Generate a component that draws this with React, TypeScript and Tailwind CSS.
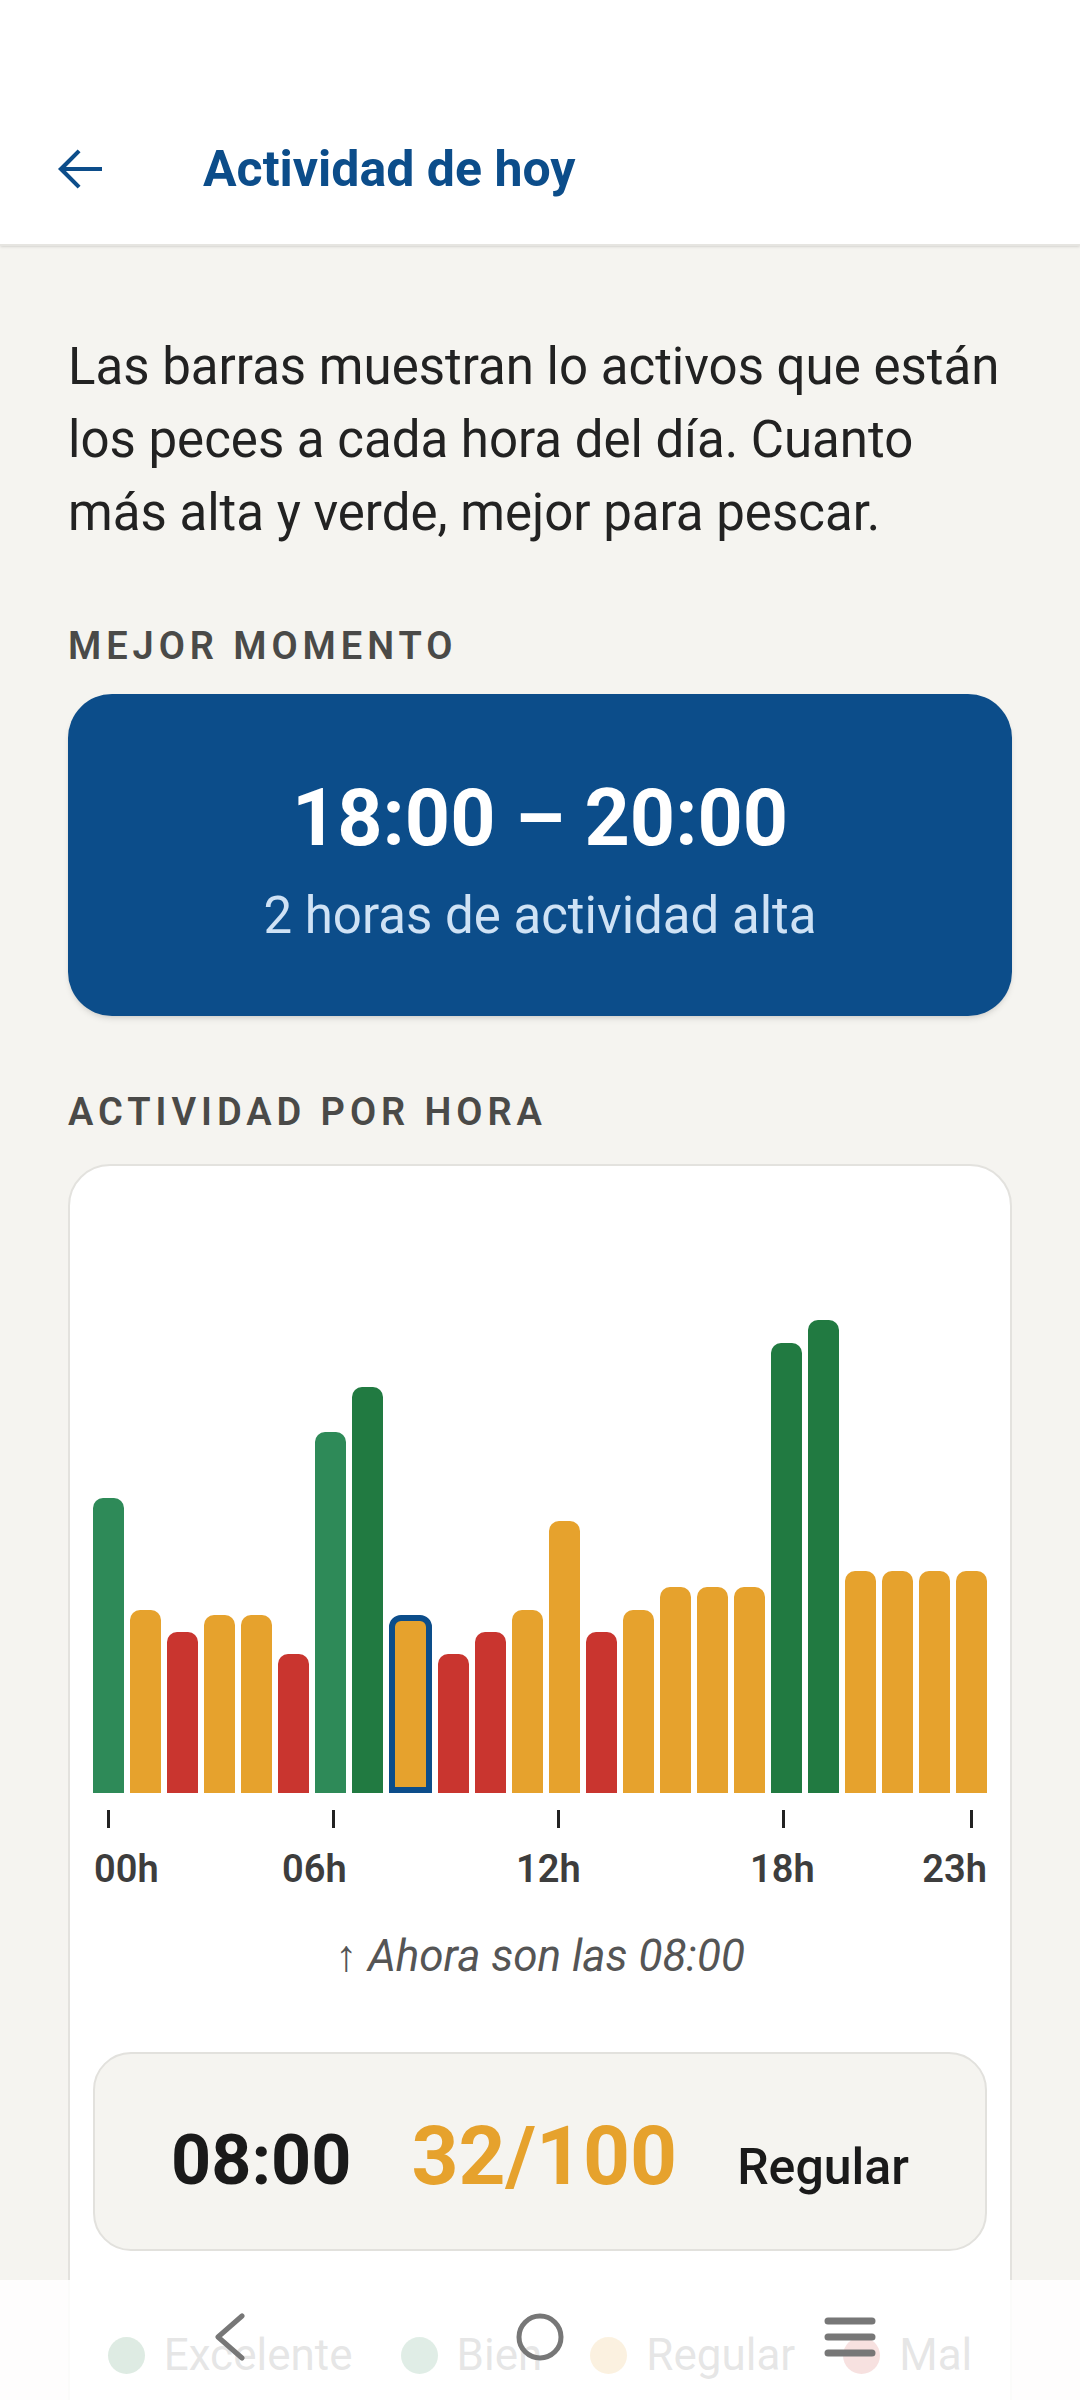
import React from "react";

const scores = [53, 33, 29, 32, 32, 25, 65, 73, 32, 25, 29, 33, 49, 29, 33, 37, 37, 37, 81, 85, 40, 40, 40, 40];
const nowHour = 8;
const ticks = [0, 6, 12, 18, 23];

const barColor = (s: number) => {
  if (s >= 70) return "bg-[#217a41]";
  if (s >= 50) return "bg-[#2e8a58]";
  if (s >= 30) return "bg-[#e6a22d]";
  return "bg-[#c9352f]";
};

const legend = [
  { label: "Excelente", dot: "bg-[#217a41]" },
  { label: "Bien", dot: "bg-[#2e8a58]" },
  { label: "Regular", dot: "bg-[#e6a22d]" },
  { label: "Mal", dot: "bg-[#c9352f]" },
];

const Chart = () => {
  return (
    <div>
      <div className="flex items-end gap-[6px] h-[556px]">
        {scores.map((s, i) =>
          i === nowHour ? (
            <div
              key={i}
              className="flex-1 rounded-t-[12px] border-[6px] border-[#0c4d8a] bg-[#e6a22d]"
              style={{ height: `${s * 5.56}px` }}
            />
          ) : (
            <div
              key={i}
              className={`flex-1 rounded-t-[10px] ${barColor(s)}`}
              style={{ height: `${s * 5.56}px` }}
            />
          )
        )}
      </div>
      <div className="flex gap-[6px] mt-[17px] h-[18px]">
        {scores.map((_, i) => (
          <div key={i} className="flex-1 flex justify-center">
            {ticks.includes(i) && <div className="w-[3px] h-full bg-[#222]" />}
          </div>
        ))}
      </div>
      <div className="relative h-[44px] mt-[19px] text-[38px] leading-[44px] font-semibold text-[#3d3d3d]">
        <span className="absolute left-[1px] top-0">00h</span>
        <span className="absolute left-[189px] top-0">06h</span>
        <span className="absolute left-[423px] top-0">12h</span>
        <span className="absolute left-[657px] top-0">18h</span>
        <span className="absolute right-0 top-0">23h</span>
      </div>
    </div>
  );
};

const NavBar = () => {
  return (
    <div className="absolute left-0 bottom-0 w-full h-[120px] bg-white/85 flex items-center justify-center gap-[210px] pb-[6px]">
      <div className="w-[100px] flex justify-center">
        <svg width="34" height="48" viewBox="0 0 34 48" fill="none">
          <path d="M29 3 L5 24 L29 45" stroke="#777" strokeWidth="5" strokeLinecap="round" strokeLinejoin="round" />
        </svg>
      </div>
      <div className="w-[100px] flex justify-center">
        <svg width="52" height="52" viewBox="0 0 52 52" fill="none">
          <circle cx="26" cy="26" r="21" stroke="#777" strokeWidth="5" />
        </svg>
      </div>
      <div className="w-[100px] flex justify-center">
        <svg width="56" height="46" viewBox="0 0 56 46" fill="none">
          <path d="M6 7 H50 M6 23 H50 M6 39 H50" stroke="#777" strokeWidth="7" strokeLinecap="round" />
        </svg>
      </div>
    </div>
  );
};

const App = () => {
  return (
    <div className="relative w-[1080px] h-[2400px] overflow-hidden bg-[#f5f4f0] font-['Roboto',sans-serif]">
      <div className="h-[246px] bg-white border-b-2 border-[#e6e5e1] shadow-sm flex items-center pt-[94px]">
        <div className="ml-[47px] w-[66px] h-[66px] flex items-center justify-center">
          <svg width="66" height="66" viewBox="0 0 24 24" fill="#0c4d8a">
            <path d="M20 11.25H6.9l5.3-5.3-1.06-1.06L4 12l7.14 7.11 1.06-1.06-5.3-5.3H20z" />
          </svg>
        </div>
        <h1 className="ml-[90px] text-[50px] font-bold text-[#0c4d8a] leading-none">Actividad de hoy</h1>
      </div>

      <div className="px-[68px] pt-[84px]">
        <p className="text-[51px] leading-[73px] text-[#222]">
          Las barras muestran lo activos que están los peces a cada hora del día. Cuanto más alta y verde, mejor para pescar.
        </p>

        <div className="mt-[75px] text-[38px] leading-[44px] font-semibold tracking-[0.13em] text-[#4a4a48]">MEJOR MOMENTO</div>

        <div className="mt-[26px] h-[322px] rounded-[44px] bg-[#0c4d8a] shadow-md flex flex-col items-center pt-[77px]">
          <div className="text-[79px] leading-[94px] font-bold text-white">18:00 – 20:00</div>
          <div className="mt-[21px] text-[51px] leading-[60px] text-[#cfe2f5]">2 horas de actividad alta</div>
        </div>

        <div className="mt-[74px] text-[38px] leading-[44px] font-semibold tracking-[0.13em] text-[#4a4a48]">ACTIVIDAD POR HORA</div>

        <div className="mt-[30px] rounded-[42px] bg-white border-2 border-[#e3e2de] px-[23px] pt-[71px] pb-[80px]">
          <Chart />

          <div className="mt-[40px] text-center italic text-[44px] leading-[50px] text-[#555]">↑ Ahora son las 08:00</div>

          <div className="mt-[71px] h-[199px] rounded-[38px] bg-[#f5f4f0] border-2 border-[#e2e1dd] flex items-center justify-center pt-[8px]">
            <div className="flex items-baseline gap-[60px]">
              <span className="text-[70px] font-bold text-[#1a1a1a] leading-none">08:00</span>
              <span className="text-[82px] font-bold text-[#e6a22d] leading-none">32/100</span>
              <span className="text-[50px] font-medium text-[#1a1a1a] leading-none">Regular</span>
            </div>
          </div>

          <div className="mt-[79px] flex justify-center gap-x-[48px]">
            {legend.map((l) => (
              <div key={l.label} className="flex items-center gap-[19px]">
                <div className={`w-[37px] h-[37px] rounded-full ${l.dot}`} />
                <span className="text-[44px] leading-[50px] text-[#555]">{l.label}</span>
              </div>
            ))}
          </div>
        </div>
      </div>

      <NavBar />
    </div>
  );
};

export default App;
